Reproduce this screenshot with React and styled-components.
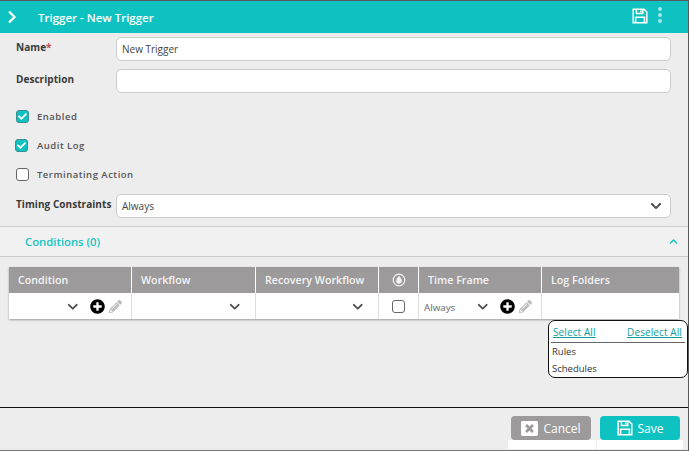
import styled, { createGlobalStyle } from "styled-components";
import { FaChevronDown, FaChevronUp, FaPlusCircle, FaPencilAlt, FaWindowClose, FaCheck } from "react-icons/fa";

const GlobalStyle = createGlobalStyle`
  html, body {
    margin: 0;
    padding: 0;
    background: #ededed;
  }
  body {
    font-family: "Open Sans", "Liberation Sans", sans-serif;
    color: #333;
  }
`;

const Drawer = styled.div`
  box-sizing: border-box;
  width: 689px;
  height: 451px;
  display: flex;
  flex-direction: column;
  overflow: hidden;
  border-top: 1px solid #5a5a5a;
  border-right: 1px solid #5a5a5a;
`;

const Header = styled.div`
  height: 32px;
  flex: none;
  display: flex;
  align-items: center;
  background: #0fc2c2;
  color: #fff;
  padding: 0 26px 0 7px;
`;

const Title = styled.div`
  margin-left: 21px;
  font-size: 11.5px;
  font-weight: 600;
  flex: 1;
`;

const HeaderSave = styled.span`
  display: flex;
  margin-right: 10px;
  margin-top: -2px;
`;

const Kebab = styled.div`
  display: flex;
  flex-direction: column;
  gap: 2px;
  margin-top: -4px;
`;

const KebabDot = styled.span`
  width: 4px;
  height: 4px;
  border-radius: 50%;
  background: #a8e8e8;
`;

const Form = styled.div`
  flex: none;
  height: 189px;
  display: flex;
  flex-direction: column;
  padding: 4px 17px 0 16px;
`;

const FieldRow = styled.div`
  display: flex;
  align-items: ${(p) => (p.$center ? "center" : "flex-start")};
  height: 24px;
  margin-top: ${(p) => p.$top || 0}px;
  margin-bottom: ${(p) => p.$gap || 0}px;
`;

const FieldLabel = styled.label`
  width: 100px;
  flex: none;
  font-size: 10px;
  font-weight: 700;
  color: #3a3a3a;
  padding-top: ${(p) => (p.$center ? 0 : 3)}px;
  padding-bottom: ${(p) => (p.$center ? 4 : 0)}px;
  white-space: nowrap;
  letter-spacing: 0.05px;
`;

const Required = styled.span`
  color: #c0504d;
`;

const Input = styled.div`
  box-sizing: border-box;
  flex: 1;
  height: 24px;
  display: flex;
  align-items: center;
  justify-content: space-between;
  background: #fff;
  border: 1px solid #ccc;
  border-radius: 5px;
  padding: 0 8px 0 5px;
  font-size: 10px;
  color: #444;
`;

const CheckRow = styled.div`
  display: flex;
  align-items: center;
  height: 14px;
  margin-left: ${(p) => p.$shift || 0}px;
  margin-top: ${(p) => p.$top}px;
`;

const CheckBox = styled.span`
  box-sizing: border-box;
  width: 13px;
  height: 13px;
  flex: none;
  display: flex;
  align-items: center;
  justify-content: center;
  border-radius: 3px;
  border: 1px solid ${(p) => (p.$checked ? "#3a8f96" : "#666")};
  background: ${(p) => (p.$checked ? "#0fc2c2" : "#fff")};
  color: #fff;
  font-size: 9px;
`;

const CheckLabel = styled.span`
  margin-left: ${(p) => (p.$shift ? 9 : 8)}px;
  font-size: 9.5px;
  font-weight: 600;
  color: #555;
  letter-spacing: 0.5px;
`;

const SelectArrow = styled.span`
  display: flex;
  font-size: 12px;
  color: #4a4a4a;
`;

const SectionBar = styled.div`
  flex: none;
  box-sizing: border-box;
  height: 31px;
  display: flex;
  align-items: center;
  justify-content: space-between;
  background: #f1f1f1;
  border-top: 1px solid #ccc;
  border-bottom: 1px solid #ccc;
  padding: 0 10px 0 25px;
  color: #14c4c4;
  font-size: 11.3px;
  font-weight: 600;
`;

const SectionToggle = styled.span`
  display: flex;
  font-size: 9px;
`;

const Content = styled.div`
  flex: 1;
  position: relative;
  padding: 10px 9px 0;
`;

const Table = styled.div`
  width: 670px;
  display: grid;
  grid-template-columns: 123px 124px 123px 40px 123px 137px;
  box-shadow: 0 1px 2px rgba(0, 0, 0, 0.35);
`;

const HeadCell = styled.div`
  box-sizing: border-box;
  height: 26px;
  display: flex;
  align-items: center;
  justify-content: ${(p) => (p.$center ? "center" : "flex-start")};
  background: #9c9a9a;
  color: #f4f4f4;
  font-size: 10.7px;
  font-weight: 600;
  padding-left: ${(p) => (p.$center ? 0 : 9)}px;
  border-right: ${(p) => (p.$last ? "none" : "1px solid #fff")};
  white-space: nowrap;
`;

const BodyCell = styled.div`
  box-sizing: border-box;
  height: 26px;
  display: flex;
  align-items: center;
  justify-content: ${(p) => (p.$center ? "center" : "flex-start")};
  background: #fff;
  padding: ${(p) => (p.$center ? "0" : "0 9px 0 5px")};
  border-right: ${(p) => (p.$last ? "none" : "1px solid #ddd")};
`;

const CellText = styled.span`
  font-size: 9.8px;
  color: #666;
  padding-top: 3px;
`;

const CellArrow = styled.span`
  margin-left: auto;
  margin-right: ${(p) => p.$inset || 0}px;
  padding-top: 1px;
  display: flex;
  font-size: 11.5px;
  color: #4a4a4a;
`;

const CellActions = styled.span`
  display: flex;
  align-items: center;
  gap: 4px;
  margin-left: 12px;
`;

const AddIcon = styled(FaPlusCircle)`
  font-size: 15px;
  color: #000;
`;

const EditIcon = styled(FaPencilAlt)`
  font-size: 13px;
  color: #bcbcbc;
`;

const FolderMenu = styled.div`
  position: absolute;
  box-sizing: border-box;
  left: 548px;
  top: 63px;
  width: 140px;
  height: 58px;
  background: #fff;
  border: 1px solid #111;
  border-radius: 7px;
  padding: 0 2px;
  font-size: 9.5px;
  color: #333;
`;

const MenuLinks = styled.div`
  display: flex;
  justify-content: space-between;
  height: 22px;
  padding: 4px 3px 0 2px;
  box-sizing: border-box;
  border-bottom: 1px solid #666;
`;

const MenuLink = styled.a`
  color: #0e9c9c;
  font-size: 10px;
  letter-spacing: 0.1px;
  text-decoration: underline;
`;

const MenuItem = styled.div`
  height: 17px;
  line-height: 17px;
  padding-left: 1px;
`;

const Footer = styled.div`
  flex: none;
  box-sizing: border-box;
  height: 44px;
  display: flex;
  justify-content: flex-end;
  gap: 1px;
  border-top: 1px solid #111;
  border-bottom: 1px solid #777;
  padding: 8px 5px 1px 0;
`;

const FooterSlot = styled.div`
  display: flex;
  flex-direction: column;
  padding: 0 ${(p) => p.$right || 3}px 0 3px;
`;

const SlotStrip = styled.div`
  flex: 1;
  background: #fff;
  margin: 0 -${(p) => p.$right || 3}px 0 -3px;
`;

const FooterButton = styled.button`
  box-sizing: border-box;
  width: 80px;
  height: 24px;
  flex: none;
  display: flex;
  align-items: center;
  justify-content: center;
  gap: 5px;
  border: none;
  border-radius: 4px;
  padding: 0;
  background: ${(p) => p.$bg};
  color: #fff;
  font-family: inherit;
  font-size: 12px;
  font-weight: 500;
`;

const ButtonIcon = styled.span`
  display: flex;
  font-size: 17px;
`;

const SaveIcon = () => (
  <svg width="16" height="16" viewBox="0 0 16 16" fill="none" stroke="#fff" strokeWidth="1.5">
    <path d="M1.2 1.2H12L14.8 4V14.8H1.2Z" />
    <path d="M4.4 1.2V5.6H10.8V1.2" />
    <path d="M3.6 14.8V9.2H12.4V14.8" />
    <path d="M8.8 2.4V4.4" />
  </svg>
);

const DropIcon = () => (
  <svg width="14" height="14" viewBox="0 0 14 14">
    <circle cx="7" cy="7" r="5.8" fill="none" stroke="#f4f4f4" strokeWidth="1.2" />
    <path d="M7 2.8C8.6 5 9.8 6.4 9.8 8a2.8 2.8 0 0 1-5.6 0C4.2 6.4 5.4 5 7 2.8Z" fill="#f4f4f4" />
  </svg>
);

const ChevronRight = () => (
  <svg width="10" height="14" viewBox="0 0 10 14">
    <path d="M2 1.5 7.5 7 2 12.5" fill="none" stroke="#fff" strokeWidth="2.2" />
  </svg>
);

const Check = ({ checked, shift, top, children }) => (
  <CheckRow $shift={shift} $top={top}>
    <CheckBox $checked={checked}>{checked && <FaCheck />}</CheckBox>
    <CheckLabel $shift={shift}>{children}</CheckLabel>
  </CheckRow>
);

const App = () => {
  return (
    <Drawer>
      <GlobalStyle />
      <Header>
        <ChevronRight />
        <Title>Trigger - New Trigger</Title>
        <HeaderSave>
          <SaveIcon />
        </HeaderSave>
        <Kebab>
          <KebabDot />
          <KebabDot />
          <KebabDot />
        </Kebab>
      </Header>

      <Form>
        <FieldRow $gap={8}>
          <FieldLabel>
            Name<Required>*</Required>
          </FieldLabel>
          <Input>New Trigger</Input>
        </FieldRow>
        <FieldRow>
          <FieldLabel>Description</FieldLabel>
          <Input />
        </FieldRow>
        <Check checked top={16}>Enabled</Check>
        <Check checked shift={-1} top={15}>Audit Log</Check>
        <Check top={15}>Terminating Action</Check>
        <FieldRow $center $top={13}>
          <FieldLabel $center>Timing Constraints</FieldLabel>
          <Input>
            Always
            <SelectArrow>
              <FaChevronDown />
            </SelectArrow>
          </Input>
        </FieldRow>
      </Form>

      <SectionBar>
        Conditions (0)
        <SectionToggle>
          <FaChevronUp />
        </SectionToggle>
      </SectionBar>

      <Content>
        <Table>
          <HeadCell>Condition</HeadCell>
          <HeadCell>Workflow</HeadCell>
          <HeadCell>Recovery Workflow</HeadCell>
          <HeadCell $center>
            <DropIcon />
          </HeadCell>
          <HeadCell>Time Frame</HeadCell>
          <HeadCell $last>Log Folders</HeadCell>

          <BodyCell>
            <CellArrow>
              <FaChevronDown />
            </CellArrow>
            <CellActions>
              <AddIcon />
              <EditIcon />
            </CellActions>
          </BodyCell>
          <BodyCell>
            <CellArrow $inset={6}>
              <FaChevronDown />
            </CellArrow>
          </BodyCell>
          <BodyCell>
            <CellArrow $inset={6}>
              <FaChevronDown />
            </CellArrow>
          </BodyCell>
          <BodyCell $center>
            <CheckBox />
          </BodyCell>
          <BodyCell>
            <CellText>Always</CellText>
            <CellArrow>
              <FaChevronDown />
            </CellArrow>
            <CellActions>
              <AddIcon />
              <EditIcon />
            </CellActions>
          </BodyCell>
          <BodyCell $last />
        </Table>

        <FolderMenu>
          <MenuLinks>
            <MenuLink>Select All</MenuLink>
            <MenuLink>Deselect All</MenuLink>
          </MenuLinks>
          <MenuItem>Rules</MenuItem>
          <MenuItem>Schedules</MenuItem>
        </FolderMenu>
      </Content>

      <Footer>
        <FooterSlot $right={5}>
          <FooterButton $bg="#9c9a9a">
            <ButtonIcon>
              <FaWindowClose />
            </ButtonIcon>
            Cancel
          </FooterButton>
          <SlotStrip $right={5} />
        </FooterSlot>
        <FooterSlot>
          <FooterButton $bg="#0fc2c2">
            <ButtonIcon>
              <SaveIcon />
            </ButtonIcon>
            Save
          </FooterButton>
          <SlotStrip />
        </FooterSlot>
      </Footer>
    </Drawer>
  );
};

export default App;
